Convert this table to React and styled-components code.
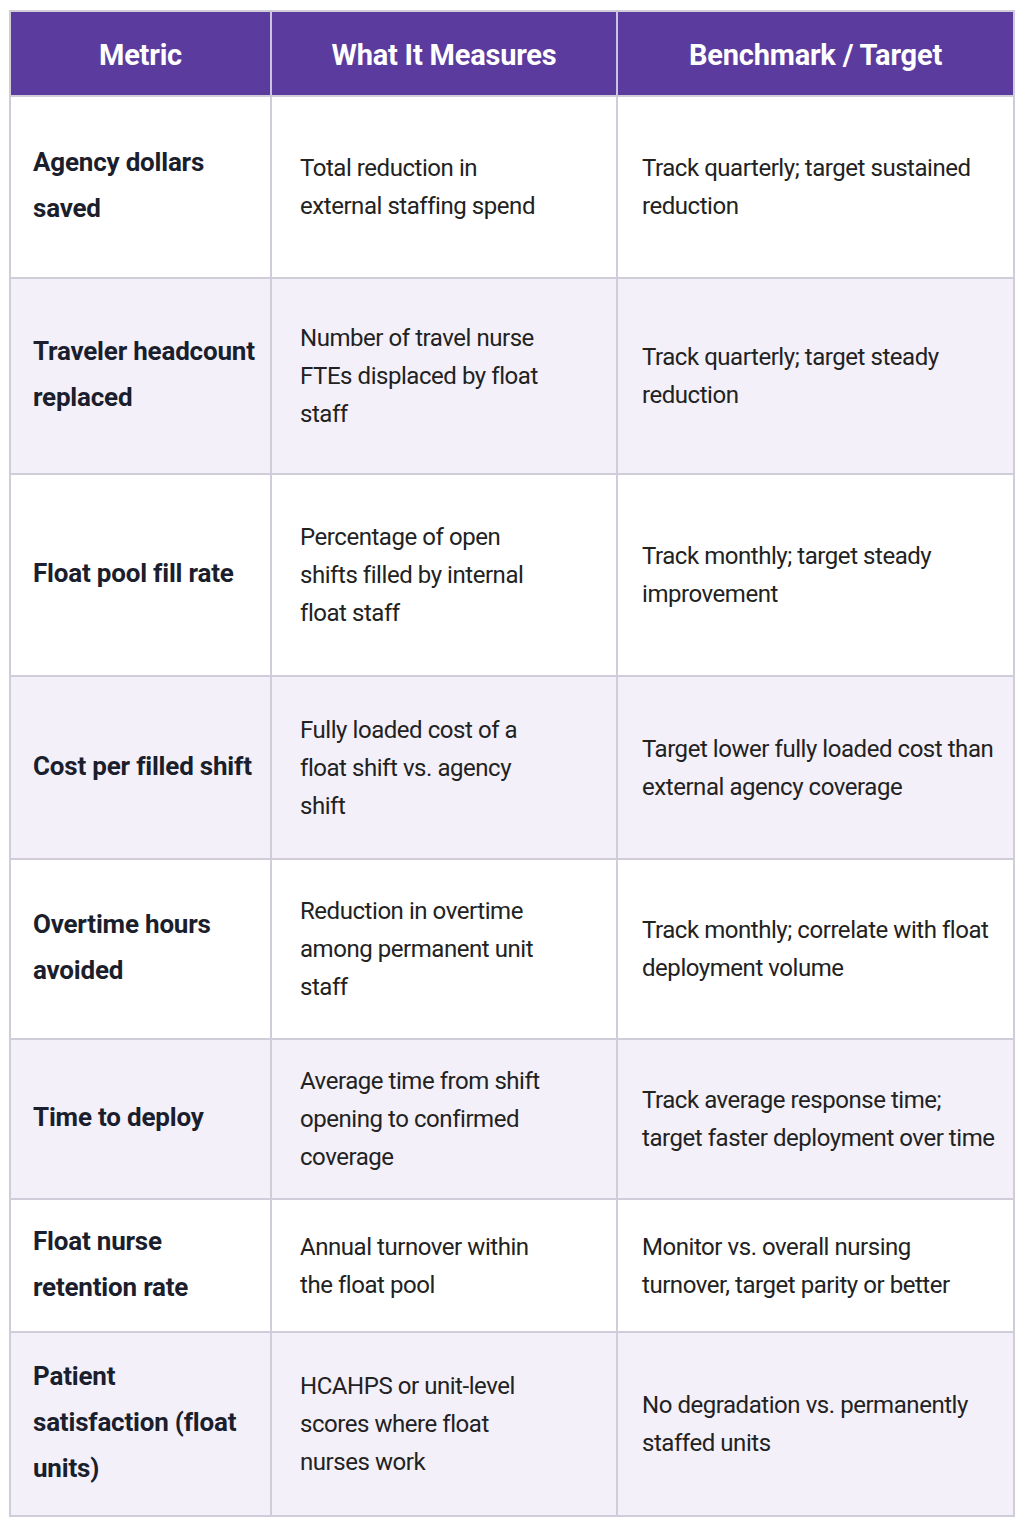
import React from 'react';
import styled, { createGlobalStyle } from 'styled-components';

const rows = [
  {
    height: 182,
    metric: ['Agency dollars', 'saved'],
    measures: ['Total reduction in', 'external staffing spend'],
    target: ['Track quarterly; target sustained', 'reduction'],
  },
  {
    height: 196,
    metric: ['Traveler headcount', 'replaced'],
    measures: ['Number of travel nurse', 'FTEs displaced by float', 'staff'],
    target: ['Track quarterly; target steady', 'reduction'],
  },
  {
    height: 202,
    metric: ['Float pool fill rate'],
    measures: ['Percentage of open', 'shifts filled by internal', 'float staff'],
    target: ['Track monthly; target steady', 'improvement'],
  },
  {
    height: 183,
    metric: ['Cost per filled shift'],
    measures: ['Fully loaded cost of a', 'float shift vs. agency', 'shift'],
    target: ['Target lower fully loaded cost than', 'external agency coverage'],
  },
  {
    height: 180,
    metric: ['Overtime hours', 'avoided'],
    measures: ['Reduction in overtime', 'among permanent unit', 'staff'],
    target: ['Track monthly; correlate with float', 'deployment volume'],
  },
  {
    height: 160,
    metric: ['Time to deploy'],
    measures: ['Average time from shift', 'opening to confirmed', 'coverage'],
    target: ['Track average response time;', 'target faster deployment over time'],
  },
  {
    height: 133,
    metric: ['Float nurse', 'retention rate'],
    measures: ['Annual turnover within', 'the float pool'],
    target: ['Monitor vs. overall nursing', 'turnover, target parity or better'],
  },
  {
    height: 184,
    metric: ['Patient', 'satisfaction (float', 'units)'],
    measures: ['HCAHPS or unit-level', 'scores where float', 'nurses work'],
    target: ['No degradation vs. permanently', 'staffed units'],
  },
];

const Lines = ({ lines }) =>
  lines.map((line, i) => (
    <React.Fragment key={i}>
      {i > 0 && <br />}
      {line}
    </React.Fragment>
  ));

const App = () => (
  <>
    <GlobalStyle />
    <Page>
      <MetricsTable>
        <colgroup>
          <col style={{ width: 261 }} />
          <col style={{ width: 346 }} />
          <col style={{ width: 397 }} />
        </colgroup>
        <thead>
          <HeaderRow>
            <HeaderCell>Metric</HeaderCell>
            <HeaderCell>What It Measures</HeaderCell>
            <HeaderCell>Benchmark / Target</HeaderCell>
          </HeaderRow>
        </thead>
        <tbody>
          {rows.map((row, i) => (
            <BodyRow key={i} $tinted={i % 2 === 1} $height={row.height}>
              <MetricCell>
                <Lines lines={row.metric} />
              </MetricCell>
              <TextCell $pad={28}>
                <Lines lines={row.measures} />
              </TextCell>
              <TextCell $pad={24}>
                <Lines lines={row.target} />
              </TextCell>
            </BodyRow>
          ))}
        </tbody>
      </MetricsTable>
    </Page>
  </>
);

export default App;

const GlobalStyle = createGlobalStyle`
  html, body {
    margin: 0;
    padding: 0;
    background: #ffffff;
  }
  body {
    font-family: Roboto, "Liberation Sans", sans-serif;
  }
`;

const Page = styled.div`
  padding: 10px 12px 20px 9px;
  background: #ffffff;
`;

const MetricsTable = styled.table`
  width: 1004px;
  border-collapse: collapse;
  table-layout: fixed;
  border: 2px solid #d0ccd9;
`;

const HeaderRow = styled.tr`
  height: 85px;
  background: #5c3b9f;
`;

const HeaderCell = styled.th`
  color: #ffffff;
  font-family: Roboto, "Liberation Sans", sans-serif;
  font-size: 29px;
  font-weight: 700;
  letter-spacing: -0.2px;
  text-align: center;
  vertical-align: middle;
  padding: 2px 12px 0;
  border-left: 2px solid #cbc3e0;

  &:first-child {
    border-left: none;
  }
`;

const BodyRow = styled.tr`
  height: ${({ $height }) => $height}px;
  background: ${({ $tinted }) => ($tinted ? '#f3f0fa' : '#ffffff')};
`;

const MetricCell = styled.td`
  vertical-align: middle;
  padding: 0 8px 4px 22px;
  border: 2px solid #d0ccd9;
  color: #1b1e2c;
  font-size: 26px;
  font-weight: 700;
  line-height: 46px;
  letter-spacing: -0.2px;
`;

const TextCell = styled.td`
  vertical-align: middle;
  padding: 0 8px 0 ${({ $pad }) => $pad}px;
  border: 2px solid #d0ccd9;
  color: #222222;
  font-size: 24px;
  font-weight: 400;
  line-height: 38px;
  letter-spacing: -0.45px;
`;
